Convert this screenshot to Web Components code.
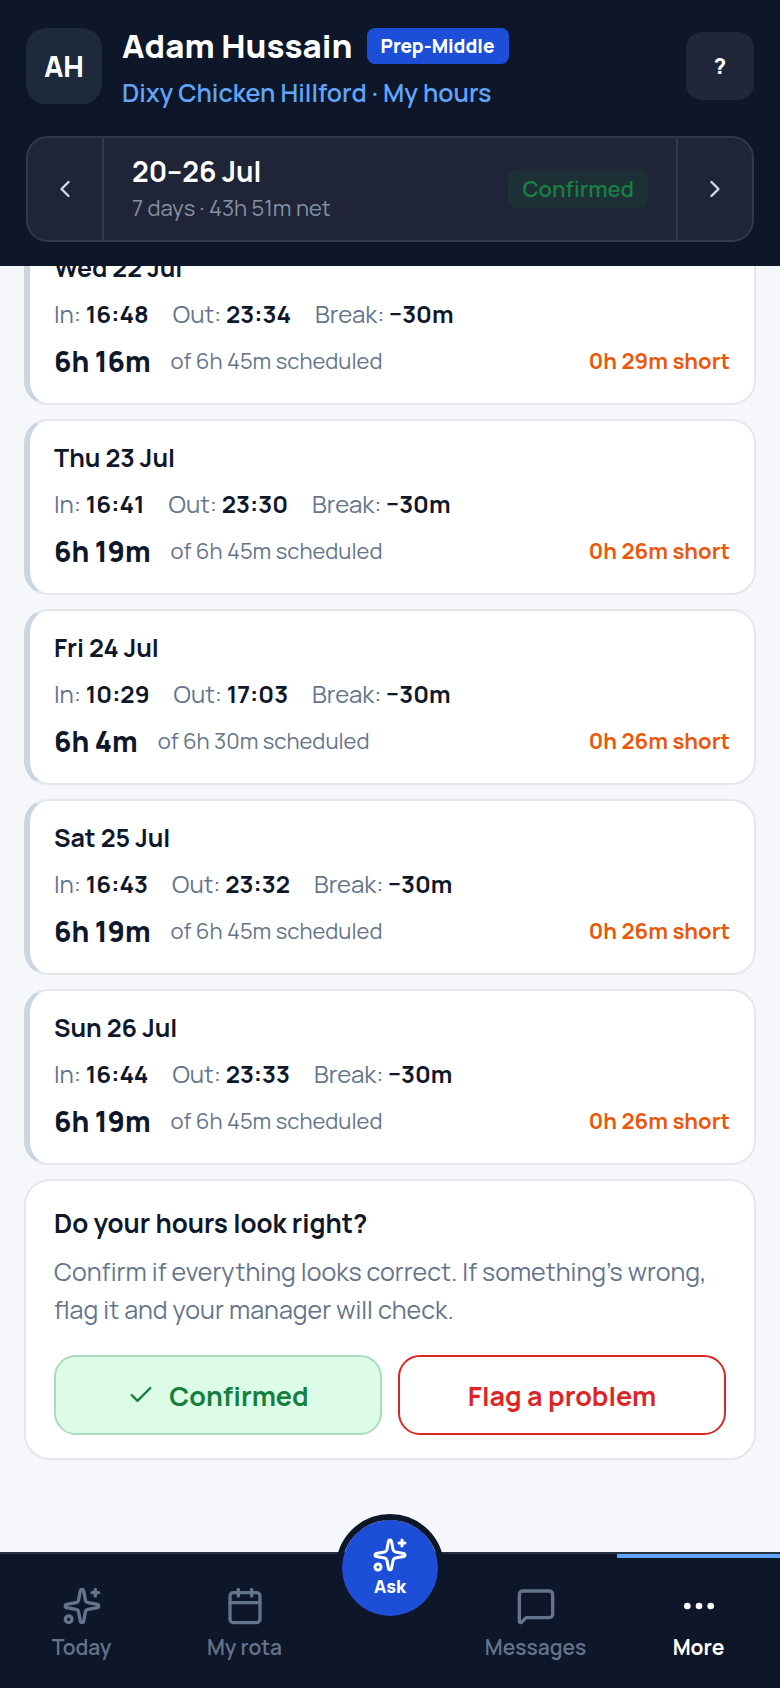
<!DOCTYPE html>
<html lang="en">
<head>
<meta charset="utf-8">
<meta name="viewport" content="width=device-width, initial-scale=1">
<title>My hours</title>
<style>
  :root {
    --ink: #0f172a;
    --muted: #64748b;
    --line: #e5e7eb;
    --bg: #f5f7fb;
    --sky: #60a5fa;
    --blue: #1d4ed8;
    --orange: #ea580c;
    --green: #15803d;
    --red: #dc2626;
  }
  html, body { height: 100%; }
  body {
    margin: 0;
    background: var(--bg);
    color: var(--ink);
    font-family: Manrope, Inter, "Liberation Sans", sans-serif;
  }
</style>
</head>
<body>
<hours-app></hours-app>

<script>
(function () {
  "use strict";

  var DAYS = [
    { day: "Wed 22 Jul", in: "16:48", out: "23:34", worked: "6h 16m", planned: "6h 45m", diff: "0h 29m short" },
    { day: "Thu 23 Jul", in: "16:41", out: "23:30", worked: "6h 19m", planned: "6h 45m", diff: "0h 26m short" },
    { day: "Fri 24 Jul", in: "10:29", out: "17:03", worked: "6h 4m", planned: "6h 30m", diff: "0h 26m short" },
    { day: "Sat 25 Jul", in: "16:43", out: "23:32", worked: "6h 19m", planned: "6h 45m", diff: "0h 26m short" },
    { day: "Sun 26 Jul", in: "16:44", out: "23:33", worked: "6h 19m", planned: "6h 45m", diff: "0h 26m short" }
  ];

  // 24x24 stroke icons
  var ICONS = {
    left: '<path d="m15 18-6-6 6-6"/>',
    right: '<path d="m9 18 6-6-6-6"/>',
    check: '<path d="M20 6 9 17l-5-5"/>',
    sparkles:
      '<path d="M11.017 2.814a1 1 0 0 1 1.966 0l1.051 5.558a2 2 0 0 0 1.594 1.594l5.558 1.051a1 1 0 0 1 0 1.966l-5.558 1.051a2 2 0 0 0-1.594 1.594l-1.051 5.558a1 1 0 0 1-1.966 0l-1.051-5.558a2 2 0 0 0-1.594-1.594l-5.558-1.051a1 1 0 0 1 0-1.966l5.558-1.051a2 2 0 0 0 1.594-1.594z"/>' +
      '<path d="M20 2v4"/><path d="M22 4h-4"/><circle cx="4" cy="20" r="2"/>',
    calendar: '<path d="M8 2v4"/><path d="M16 2v4"/><rect width="18" height="18" x="3" y="4" rx="2"/><path d="M3 10h18"/>',
    message: '<path d="M22 17a2 2 0 0 1-2 2H6.828a2 2 0 0 0-1.414.586l-2.202 2.202A.71.71 0 0 1 2 21.286V5a2 2 0 0 1 2-2h16a2 2 0 0 1 2 2z"/>',
    more: '<g fill="currentColor"><circle cx="12" cy="12" r="1"/><circle cx="19" cy="12" r="1"/><circle cx="5" cy="12" r="1"/></g>'
  };

  function define(name, render) {
    customElements.define(
      name,
      class extends HTMLElement {
        constructor() {
          super();
          this.attachShadow({ mode: "open" });
        }
        connectedCallback() {
          this.shadowRoot.innerHTML = render(this);
        }
      }
    );
  }

  define("ui-icon", function (el) {
    return (
      "<style>" +
      ":host{display:inline-flex;flex:none;width:var(--icon-size,40px);height:var(--icon-size,40px)}" +
      "svg{width:100%;height:100%;fill:none;stroke:currentColor;stroke-width:2;stroke-linecap:round;stroke-linejoin:round}" +
      "</style>" +
      '<svg viewBox="0 0 24 24" aria-hidden="true">' + ICONS[el.getAttribute("name")] + "</svg>"
    );
  });

  define("role-badge", function () {
    return (
      "<style>" +
      ":host{display:inline-flex;align-items:center;height:36px;padding:0 14px;border-radius:8px;background:var(--blue);color:#fff;font-size:19px;font-weight:800;white-space:nowrap}" +
      ":host([tone=confirmed]){height:38px;background:#1c3036;color:#1a7f44;font-size:22px;font-weight:600}" +
      "</style><slot></slot>"
    );
  });

  define("staff-header", function () {
    return (
      "<style>" +
      ":host{display:flex;align-items:flex-start;gap:20px;color:#fff}" +
      ".avatar{display:grid;place-items:center;flex:none;width:76px;height:76px;border-radius:20px;background:#1e293b;font-size:28px;font-weight:800}" +
      ".who{flex:1;min-width:0;display:flex;flex-direction:column;gap:10px}" +
      ".name{display:flex;align-items:center;gap:14px}" +
      "h1{margin:0;font-size:33px;line-height:36px;font-weight:800;white-space:nowrap}" +
      "p{margin:0;color:var(--sky);font-size:25px;line-height:38px;font-weight:600}" +
      "button{flex:none;width:68px;height:68px;margin:4px 0;padding:0;border:0;border-radius:16px;background:#20273a;color:#fff;font-family:inherit;font-size:22px;font-weight:800}" +
      "</style>" +
      '<div class="avatar">AH</div>' +
      '<div class="who"><div class="name"><h1><slot name="name"></slot></h1><slot name="role"></slot></div>' +
      '<p><slot name="place"></slot></p></div>' +
      '<button type="button" title="Help">?</button>'
    );
  });

  define("week-picker", function () {
    return (
      "<style>" +
      ":host{display:flex;height:102px;border:2px solid #31384a;border-radius:22px;background:#1f2437;color:#fff;overflow:hidden}" +
      "button{display:grid;place-items:center;flex:none;width:76px;padding:0;border:0;background:none;color:#d5dbe8;--icon-size:28px}" +
      "button:first-of-type{border-right:2px solid #31384a}" +
      "button:last-of-type{border-left:2px solid #31384a}" +
      ".week{flex:1;display:flex;align-items:center;justify-content:space-between;padding:0 28px}" +
      "h2{margin:0 0 2px;font-size:28px;line-height:36px;font-weight:700}" +
      "p{margin:0;color:#8591a5;font-size:22px;line-height:34px;font-weight:400}" +
      "</style>" +
      '<button type="button" aria-label="Previous week"><ui-icon name="left"></ui-icon></button>' +
      '<div class="week"><div><h2><slot name="range"></slot></h2><p><slot name="total"></slot></p></div><slot name="status"></slot></div>' +
      '<button type="button" aria-label="Next week"><ui-icon name="right"></ui-icon></button>'
    );
  });

  define("day-card", function () {
    return (
      "<style>" +
      ":host{display:block;padding:19px 24px 23px;border:2px solid var(--line);border-left:6px solid #cbd5e1;border-radius:24px;background:#fff}" +
      "h3{margin:0 0 8px;font-size:25px;line-height:36px;font-weight:700}" +
      ".clock{display:flex;gap:24px;margin-bottom:8px;color:var(--muted);font-size:24px;line-height:40px;font-weight:400}" +
      ".sum{display:flex;align-items:center;gap:20px;color:var(--muted);font-size:22px;line-height:38px;font-weight:400}" +
      ".worked{color:var(--ink);font-size:28px;font-weight:800}" +
      ".diff{margin-left:auto;color:var(--orange);font-weight:700}" +
      "::slotted(b){color:var(--ink);font-weight:700}" +
      "</style>" +
      '<h3><slot name="day"></slot></h3>' +
      '<div class="clock"><span>In: <slot name="in"></slot></span><span>Out: <slot name="out"></slot></span><span>Break: <slot name="break"></slot></span></div>' +
      '<div class="sum"><span class="worked"><slot name="worked"></slot></span><span>of <slot name="planned"></slot> scheduled</span><span class="diff"><slot name="diff"></slot></span></div>'
    );
  });

  define("confirm-card", function () {
    return (
      "<style>" +
      ":host{display:block;padding:24px 28px 23px;border:2px solid var(--line);border-radius:26px;background:#fff}" +
      "h3{margin:0 0 12px;font-size:26px;line-height:36px;font-weight:700}" +
      "p{margin:0 0 26px;color:var(--muted);font-size:25px;line-height:38px;font-weight:400}" +
      ".actions{display:flex;gap:16px}" +
      "button{flex:1;display:flex;align-items:center;justify-content:center;gap:14px;height:80px;padding:0;border:2px solid;border-radius:22px;font-family:inherit;font-size:27px;font-weight:700;--icon-size:28px}" +
      ".yes{border-color:#a9dcbb;background:#dcfce7;color:var(--green)}" +
      ".no{border-color:var(--red);background:#fff;color:var(--red)}" +
      "</style>" +
      "<h3>Do your hours look right?</h3>" +
      "<p>Confirm if everything looks correct. If something’s wrong, flag it and your manager will check.</p>" +
      '<div class="actions"><button type="button" class="yes"><ui-icon name="check"></ui-icon>Confirmed</button>' +
      '<button type="button" class="no">Flag a problem</button></div>'
    );
  });

  define("nav-item", function (el) {
    return (
      "<style>" +
      ":host{display:flex;flex:1;min-width:0}" +
      "a{flex:1;display:flex;flex-direction:column;align-items:center;gap:4px;padding-top:28px;border-top:4px solid transparent;color:var(--muted);font-size:21px;line-height:34px;font-weight:600;text-decoration:none}" +
      ":host([active]) a{border-top-color:var(--sky);color:#fff;font-weight:700}" +
      "</style>" +
      '<a href="#' + el.getAttribute("icon") + '"><ui-icon name="' + el.getAttribute("icon") + '"></ui-icon><slot></slot></a>'
    );
  });

  define("bottom-nav", function () {
    return (
      "<style>" +
      ":host{position:relative;display:flex;height:134px;border-top:2px solid #263244;background:#0e1629}" +
      ".gap{flex:none;width:128px}" +
      // round button that overlaps the top edge of the bar
      "button{position:absolute;left:50%;top:-40px;box-sizing:border-box;width:108px;height:108px;margin-left:-54px;padding:0;border:6px solid #0e1629;border-radius:50%;background:var(--blue);background-clip:padding-box;color:#fff;" +
      "display:flex;flex-direction:column;align-items:center;justify-content:center;font-family:inherit;font-size:18px;line-height:26px;font-weight:800;--icon-size:36px}" +
      "</style>" +
      '<slot name="start"></slot><span class="gap"></span><slot name="end"></slot>' +
      '<button type="button"><ui-icon name="sparkles"></ui-icon>Ask</button>'
    );
  });

  define("hours-app", function () {
    var cards = DAYS.map(function (d) {
      return (
        "<day-card>" +
        '<span slot="day">' + d.day + "</span>" +
        '<b slot="in">' + d.in + "</b>" +
        '<b slot="out">' + d.out + "</b>" +
        '<b slot="break">−30m</b>' +
        '<span slot="worked">' + d.worked + "</span>" +
        '<span slot="planned">' + d.planned + "</span>" +
        '<span slot="diff">' + d.diff + "</span>" +
        "</day-card>"
      );
    }).join("");

    return (
      "<style>" +
      ":host{display:flex;flex-direction:column;height:100vh;overflow:hidden}" +
      "header{flex:none;display:flex;flex-direction:column;gap:24px;padding:28px 26px 24px;background:#0e1629}" +
      // list is scrolled to its end, so the first card sits partly under the header
      "main{flex:1;min-height:0;display:flex;flex-direction:column;justify-content:flex-end;gap:14px;padding:0 24px 92px;overflow:hidden}" +
      "main>*{flex:none}" +
      "bottom-nav{flex:none}" +
      "</style>" +
      "<header><staff-header>" +
      '<span slot="name">Adam Hussain</span><role-badge slot="role">Prep-Middle</role-badge>' +
      '<span slot="place">Dixy Chicken Hillford · My hours</span>' +
      "</staff-header><week-picker>" +
      '<span slot="range">20–26 Jul</span><span slot="total">7 days · 43h 51m net</span>' +
      '<role-badge slot="status" tone="confirmed">Confirmed</role-badge>' +
      "</week-picker></header>" +
      "<main>" + cards + "<confirm-card></confirm-card></main>" +
      "<bottom-nav>" +
      '<nav-item slot="start" icon="sparkles">Today</nav-item><nav-item slot="start" icon="calendar">My rota</nav-item>' +
      '<nav-item slot="end" icon="message">Messages</nav-item><nav-item slot="end" icon="more" active>More</nav-item>' +
      "</bottom-nav>"
    );
  });
})();
</script>
</body>
</html>
